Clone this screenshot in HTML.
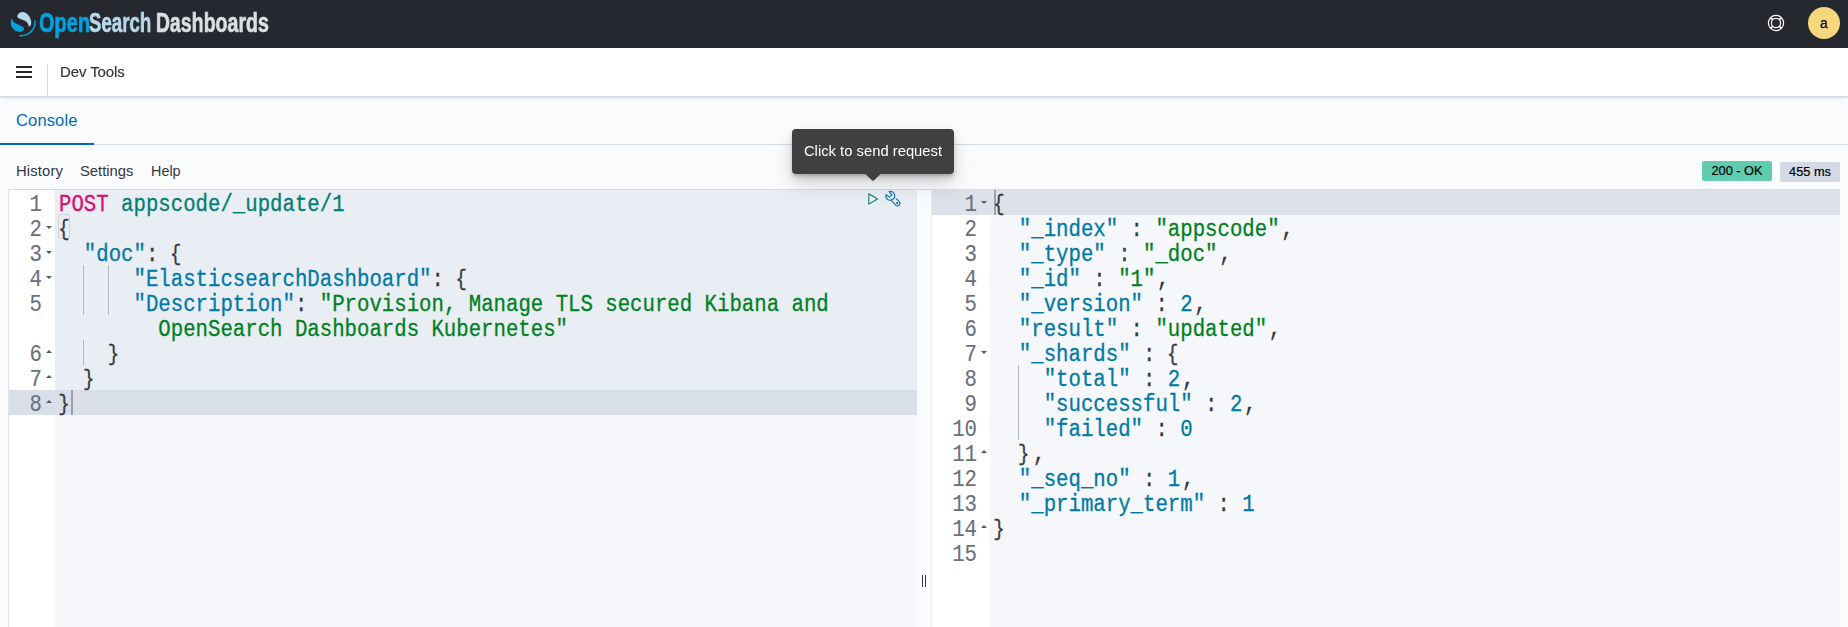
<!DOCTYPE html>
<html>
<head>
<meta charset="utf-8">
<title>Dev Tools - OpenSearch Dashboards</title>
<style>
*{box-sizing:border-box;margin:0;padding:0}
html,body{width:1848px;height:627px;overflow:hidden;background:#fafbfd;font-family:"Liberation Sans",sans-serif;color:#343741}
#top{position:absolute;left:0;top:0;width:1848px;height:48px;background:#25282f}
#sub{position:absolute;left:0;top:48px;width:1848px;height:49px;background:#fff;border-bottom:1px solid #d3dae6;box-shadow:0 2px 2px -1px rgba(152,162,179,.3),0 1px 5px -2px rgba(152,162,179,.3)}
#sep{position:absolute;left:47px;top:64px;width:1px;height:32px;background:#d3dae6}
.hb{position:absolute;left:16px;width:16px;height:2px;background:#25282f}
#devtools{will-change:transform;position:absolute;left:60px;top:62.8px;font-size:15px;letter-spacing:-.1px;-webkit-text-stroke:.2px #343741;line-height:18px;color:#343741;white-space:nowrap}
#tabline{position:absolute;left:0;top:144px;width:1848px;height:1px;background:#d3dae6}
#tabsel{position:absolute;left:0;top:143px;width:94px;height:2px;background:#006bb4}
#console{position:absolute;left:16px;top:110px;letter-spacing:.15px;font-size:16.5px;line-height:20px;color:#006bb4;white-space:nowrap}
.menu{position:absolute;top:162px;font-size:14.8px;line-height:18px;color:#343741;white-space:nowrap}
.wm .c{font-size:26.8px}
.wm{will-change:transform;position:absolute;top:7.6px;font-weight:bold;font-size:27.3px;-webkit-text-stroke:.65px currentColor;line-height:30px;white-space:nowrap;transform-origin:0 0}
.ed{position:absolute;top:190px;height:437px;background:#f5f7fa;overflow:hidden}
.gut{position:absolute;left:0;top:0;height:437px;background:#fff}
.code{font-family:"Liberation Mono",monospace;font-size:23px;line-height:25px;white-space:pre;transform-origin:0 0;transform:scaleX(0.8995);position:absolute;height:25px;color:#343741;-webkit-text-stroke:.27px currentColor}
.num{font-family:"Liberation Mono",monospace;font-size:23px;line-height:25px;white-space:pre;transform-origin:100% 0;transform:scaleX(0.8995);position:absolute;height:25px;color:#69707d;text-align:right;-webkit-text-stroke:.12px currentColor}
.m{color:#dd0a73}.u{color:#017d73}.k{color:#0079a5}.s{color:#00801f}.n{color:#0079a5}.p{color:#343741}
.b{font-size:.92em;margin-left:-.9px;margin-right:2px;position:relative;top:-1.2px}
.cm{position:relative;left:1.8px}
.hl{position:absolute;background:#e9edf4}
.act{position:absolute;background:#dce1ea}
.guide{position:absolute;width:1px;background:#b4b8c2}
.brk{position:absolute;width:12.5px;height:25px;border:1px solid #cfd3db;border-radius:3px}
.cur{position:absolute;width:2px;height:25px;background:#9a9fa9}
.fold{position:absolute;width:0;height:0;border-left:3px solid transparent;border-right:3px solid transparent}
.fd{border-top:3.5px solid #55585f}
.fu{border-bottom:3.5px solid #55585f}
.badge{position:absolute;-webkit-text-stroke:.2px #000;font-size:12.75px;line-height:20px;height:20px;color:#000;border-radius:2px;text-align:center;white-space:nowrap}
#tip{will-change:transform;position:absolute;left:792px;top:129px;width:162px;height:44.5px;background:#404040;border-radius:4px;color:#fff;font-size:14.8px;line-height:44px;text-align:center;white-space:nowrap}
#tipsh{position:absolute;left:792px;top:129px;width:162px;height:44.5px;border-radius:4px;box-shadow:0 12px 24px 0 rgba(0,0,0,.1),0 6px 12px 0 rgba(0,0,0,.1),0 4px 4px 0 rgba(0,0,0,.1),0 2px 2px 0 rgba(0,0,0,.1)}
#tiparrow{position:absolute;left:867px;top:166.9px;width:12px;height:12px;background:#404040;border-radius:2px;transform:rotate(45deg)}
#avatar{will-change:transform;position:absolute;left:1808px;top:7px;width:32px;height:32px;border-radius:16px;background:#f5d77d;color:#000;font-size:14px;line-height:32px;text-align:center;-webkit-text-stroke:.25px #000}
</style>
</head>
<body>
<div id="top"></div>
<!-- logo mark -->
<svg style="position:absolute;left:0;top:4px" width="60" height="40" viewBox="0 0 940 627">
 <path d="M272 190 C285 140 330 118 375 128 C440 142 482 215 490 285 C492 320 475 350 452 356 C448 300 410 262 350 245 C305 232 268 222 272 190Z" fill="#b9d9eb"/>
 <path d="M188 218 C160 260 160 320 190 370 C225 425 290 450 340 432 C368 420 380 395 374 368 C330 338 270 325 232 295 C205 272 190 250 188 218Z" fill="#00a3e0"/>
 <path d="M548 266 C552 340 520 420 440 468 C400 490 350 502 308 498" fill="none" stroke="#00a3e0" stroke-width="23" stroke-linecap="round"/>
</svg>
<div class="wm" id="wm0" style="left:38.6px;color:#00a3e0;transform:scaleX(0.7373)"><span class="c">O</span>pen</div>
<div class="wm" id="wm1" style="left:89.1px;color:#b9d9eb;transform:scaleX(0.6877)"><span class="c">S</span>earch</div>
<div class="wm" id="wm2" style="left:156.3px;color:#d9e1e2;transform:scaleX(0.7164)"><span class="c">D</span>ashboards</div>
<!-- help icon -->
<svg style="position:absolute;left:1767px;top:14px" width="18" height="18" viewBox="0 0 18 18" fill="none" stroke="#fff" stroke-width="1.2">
 <circle cx="9" cy="9" r="7.6"/><circle cx="9" cy="9" r="4.6"/>
 <path d="M3.6 3.6L5.8 5.8M14.4 3.6L12.2 5.8M3.6 14.4L5.8 12.2M14.4 14.4L12.2 12.2" stroke-width="1.7"/>
</svg>
<div id="avatar">a</div>
<div id="sub"></div>
<div id="sep"></div>
<div class="hb" style="top:66px"></div><div class="hb" style="top:71px"></div><div class="hb" style="top:76px"></div>
<div id="devtools">Dev Tools</div>
<div id="tabline"></div><div id="tabsel"></div>
<div id="console">Console</div>
<div class="menu" style="left:16px;letter-spacing:.14px">History</div>
<div class="menu" style="left:80px">Settings</div>
<div class="menu" style="left:151px;font-size:14.4px">Help</div>

<div style="position:absolute;left:8px;top:189px;width:1832px;height:438px;border-left:1px solid #dfe4ec;border-top:1px solid #d3dae6"></div>
<div class="ed" id="L" style="left:9px;width:908px">
<div class="gut" style="width:46px"></div>
<div class="hl" style="left:46px;top:0;width:862px;height:225px"></div>
<div class="act" style="background:#d9dfe8;left:0;top:200px;width:908px;height:25px"></div>
<div class="guide" style="left:74px;top:75px;height:50px"></div>
<div class="guide" style="left:99px;top:75px;height:50px"></div>
<div class="guide" style="left:74px;top:150px;height:25px"></div>
<div class="brk" style="left:48.7px;top:24.3px"></div>
<div class="cur" style="left:62.015px;top:200px"></div>
<div class="num" style="top:3px;left:0;width:33px">1</div>
<div class="code" style="top:3px;left:50.1px"><span class="m">POST</span><span class="u"> appscode/_update/1</span></div>
<div class="num" style="top:28px;left:0;width:33px">2</div>
<div class="fold fd" style="left:36.8px;top:35.5px"></div>
<div class="code" style="top:28px;left:50.1px"><span class="p"><span class="b">{</span></span></div>
<div class="num" style="top:53px;left:0;width:33px">3</div>
<div class="fold fd" style="left:36.8px;top:60.5px"></div>
<div class="code" style="top:53px;left:50.1px">  <span class="k">"doc"</span><span class="p">: <span class="b">{</span></span></div>
<div class="num" style="top:78px;left:0;width:33px">4</div>
<div class="fold fd" style="left:36.8px;top:85.5px"></div>
<div class="code" style="top:78px;left:50.1px">      <span class="k">"ElasticsearchDashboard"</span><span class="p">: <span class="b">{</span></span></div>
<div class="num" style="top:103px;left:0;width:33px">5</div>
<div class="code" style="top:103px;left:50.1px">      <span class="k">"Description"</span><span class="p">: </span><span class="s">"Provision, Manage TLS secured Kibana and</span></div>
<div class="code" style="top:128px;left:50.1px">        <span class="s">OpenSearch Dashboards Kubernetes"</span></div>
<div class="num" style="top:153px;left:0;width:33px">6</div>
<div class="fold fu" style="left:36.8px;top:159.5px"></div>
<div class="code" style="top:153px;left:50.1px">    <span class="p"><span class="b">}</span></span></div>
<div class="num" style="top:178px;left:0;width:33px">7</div>
<div class="fold fu" style="left:36.8px;top:184.5px"></div>
<div class="code" style="top:178px;left:50.1px">  <span class="p"><span class="b">}</span></span></div>
<div class="num" style="top:203px;left:0;width:33px">8</div>
<div class="fold fu" style="left:36.8px;top:209.5px"></div>
<div class="code" style="top:203px;left:50.1px"><span class="p"><span class="b">}</span></span></div>
</div>
<div class="ed" id="R" style="left:932px;width:908px">
<div class="gut" style="width:58px"></div>
<div class="act" style="left:0;top:0;width:908px;height:25px"></div>
<div class="guide" style="left:85.93px;top:175px;height:75px"></div>
<div class="cur" style="left:62px;top:0"></div>
<div class="num" style="top:3px;left:0;width:45px">1</div>
<div class="fold fd" style="left:49px;top:10.5px"></div>
<div class="code" style="top:3px;left:62px"><span class="p"><span class="b">{</span></span></div>
<div class="num" style="top:28px;left:0;width:45px">2</div>
<div class="code" style="top:28px;left:62px">  <span class="k">"_index"</span><span class="p"> : </span><span class="s">"appscode"</span><span class="p"><span class="cm">,</span></span></div>
<div class="num" style="top:53px;left:0;width:45px">3</div>
<div class="code" style="top:53px;left:62px">  <span class="k">"_type"</span><span class="p"> : </span><span class="s">"_doc"</span><span class="p"><span class="cm">,</span></span></div>
<div class="num" style="top:78px;left:0;width:45px">4</div>
<div class="code" style="top:78px;left:62px">  <span class="k">"_id"</span><span class="p"> : </span><span class="s">"1"</span><span class="p"><span class="cm">,</span></span></div>
<div class="num" style="top:103px;left:0;width:45px">5</div>
<div class="code" style="top:103px;left:62px">  <span class="k">"_version"</span><span class="p"> : </span><span class="n">2</span><span class="p"><span class="cm">,</span></span></div>
<div class="num" style="top:128px;left:0;width:45px">6</div>
<div class="code" style="top:128px;left:62px">  <span class="k">"result"</span><span class="p"> : </span><span class="s">"updated"</span><span class="p"><span class="cm">,</span></span></div>
<div class="num" style="top:153px;left:0;width:45px">7</div>
<div class="fold fd" style="left:49px;top:160.5px"></div>
<div class="code" style="top:153px;left:62px">  <span class="k">"_shards"</span><span class="p"> : <span class="b">{</span></span></div>
<div class="num" style="top:178px;left:0;width:45px">8</div>
<div class="code" style="top:178px;left:62px">    <span class="k">"total"</span><span class="p"> : </span><span class="n">2</span><span class="p"><span class="cm">,</span></span></div>
<div class="num" style="top:203px;left:0;width:45px">9</div>
<div class="code" style="top:203px;left:62px">    <span class="k">"successful"</span><span class="p"> : </span><span class="n">2</span><span class="p"><span class="cm">,</span></span></div>
<div class="num" style="top:228px;left:0;width:45px">10</div>
<div class="code" style="top:228px;left:62px">    <span class="k">"failed"</span><span class="p"> : </span><span class="n">0</span></div>
<div class="num" style="top:253px;left:0;width:45px">11</div>
<div class="fold fu" style="left:49px;top:259.5px"></div>
<div class="code" style="top:253px;left:62px">  <span class="p"><span class="b">}</span><span class="cm">,</span></span></div>
<div class="num" style="top:278px;left:0;width:45px">12</div>
<div class="code" style="top:278px;left:62px">  <span class="k">"_seq_no"</span><span class="p"> : </span><span class="n">1</span><span class="p"><span class="cm">,</span></span></div>
<div class="num" style="top:303px;left:0;width:45px">13</div>
<div class="code" style="top:303px;left:62px">  <span class="k">"_primary_term"</span><span class="p"> : </span><span class="n">1</span></div>
<div class="num" style="top:328px;left:0;width:45px">14</div>
<div class="fold fu" style="left:49px;top:334.5px"></div>
<div class="code" style="top:328px;left:62px"><span class="p"><span class="b">}</span></span></div>
<div class="num" style="top:353px;left:0;width:45px">15</div>
</div>
<!-- resizer -->
<div style="position:absolute;left:917px;top:190px;width:15px;height:437px;background:#fafbfd"></div>
<div style="position:absolute;left:922px;top:574.7px;width:1.1px;height:12.5px;background:#343741"></div>
<div style="position:absolute;left:925px;top:574.7px;width:1.1px;height:12.5px;background:#343741"></div>
<div style="position:absolute;left:931px;top:190px;width:1px;height:437px;background:#e9edf2"></div>
<!-- action icons -->
<svg style="position:absolute;left:860px;top:186px" width="20" height="26" viewBox="0 0 20 26" fill="none" stroke="#017d73" stroke-width="1.05" stroke-linejoin="round"><path d="M8.85 7.8L17.55 12.95L8.85 18.1Z"/></svg>
<svg style="position:absolute;left:880px;top:186px" width="24" height="26" viewBox="0 0 24 26" fill="none" stroke="#006bb4" stroke-width="1.05" stroke-linecap="round" stroke-linejoin="round">
 <path d="M9.11 5.45A4.5 4.5 0 1 1 5.92 8.62L9.44 11.19L11.92 8.91Z"/>
 <path d="M16.1 12.7L19.2 15.7A2.4 2.4 0 0 1 15.8 19.1L11.2 14.3"/>
 <circle cx="17.1" cy="17" r=".55" fill="#006bb4"/>
</svg>
<div id="tipsh"></div><div id="tiparrow"></div><div id="tip">Click to send request</div>
<div class="badge" style="left:1702px;top:161px;width:70px;background:#62ccb0">200 - OK</div>
<div class="badge" style="left:1780px;top:162px;width:60px;background:#d3dae6">455 ms</div>
</body>
</html>
